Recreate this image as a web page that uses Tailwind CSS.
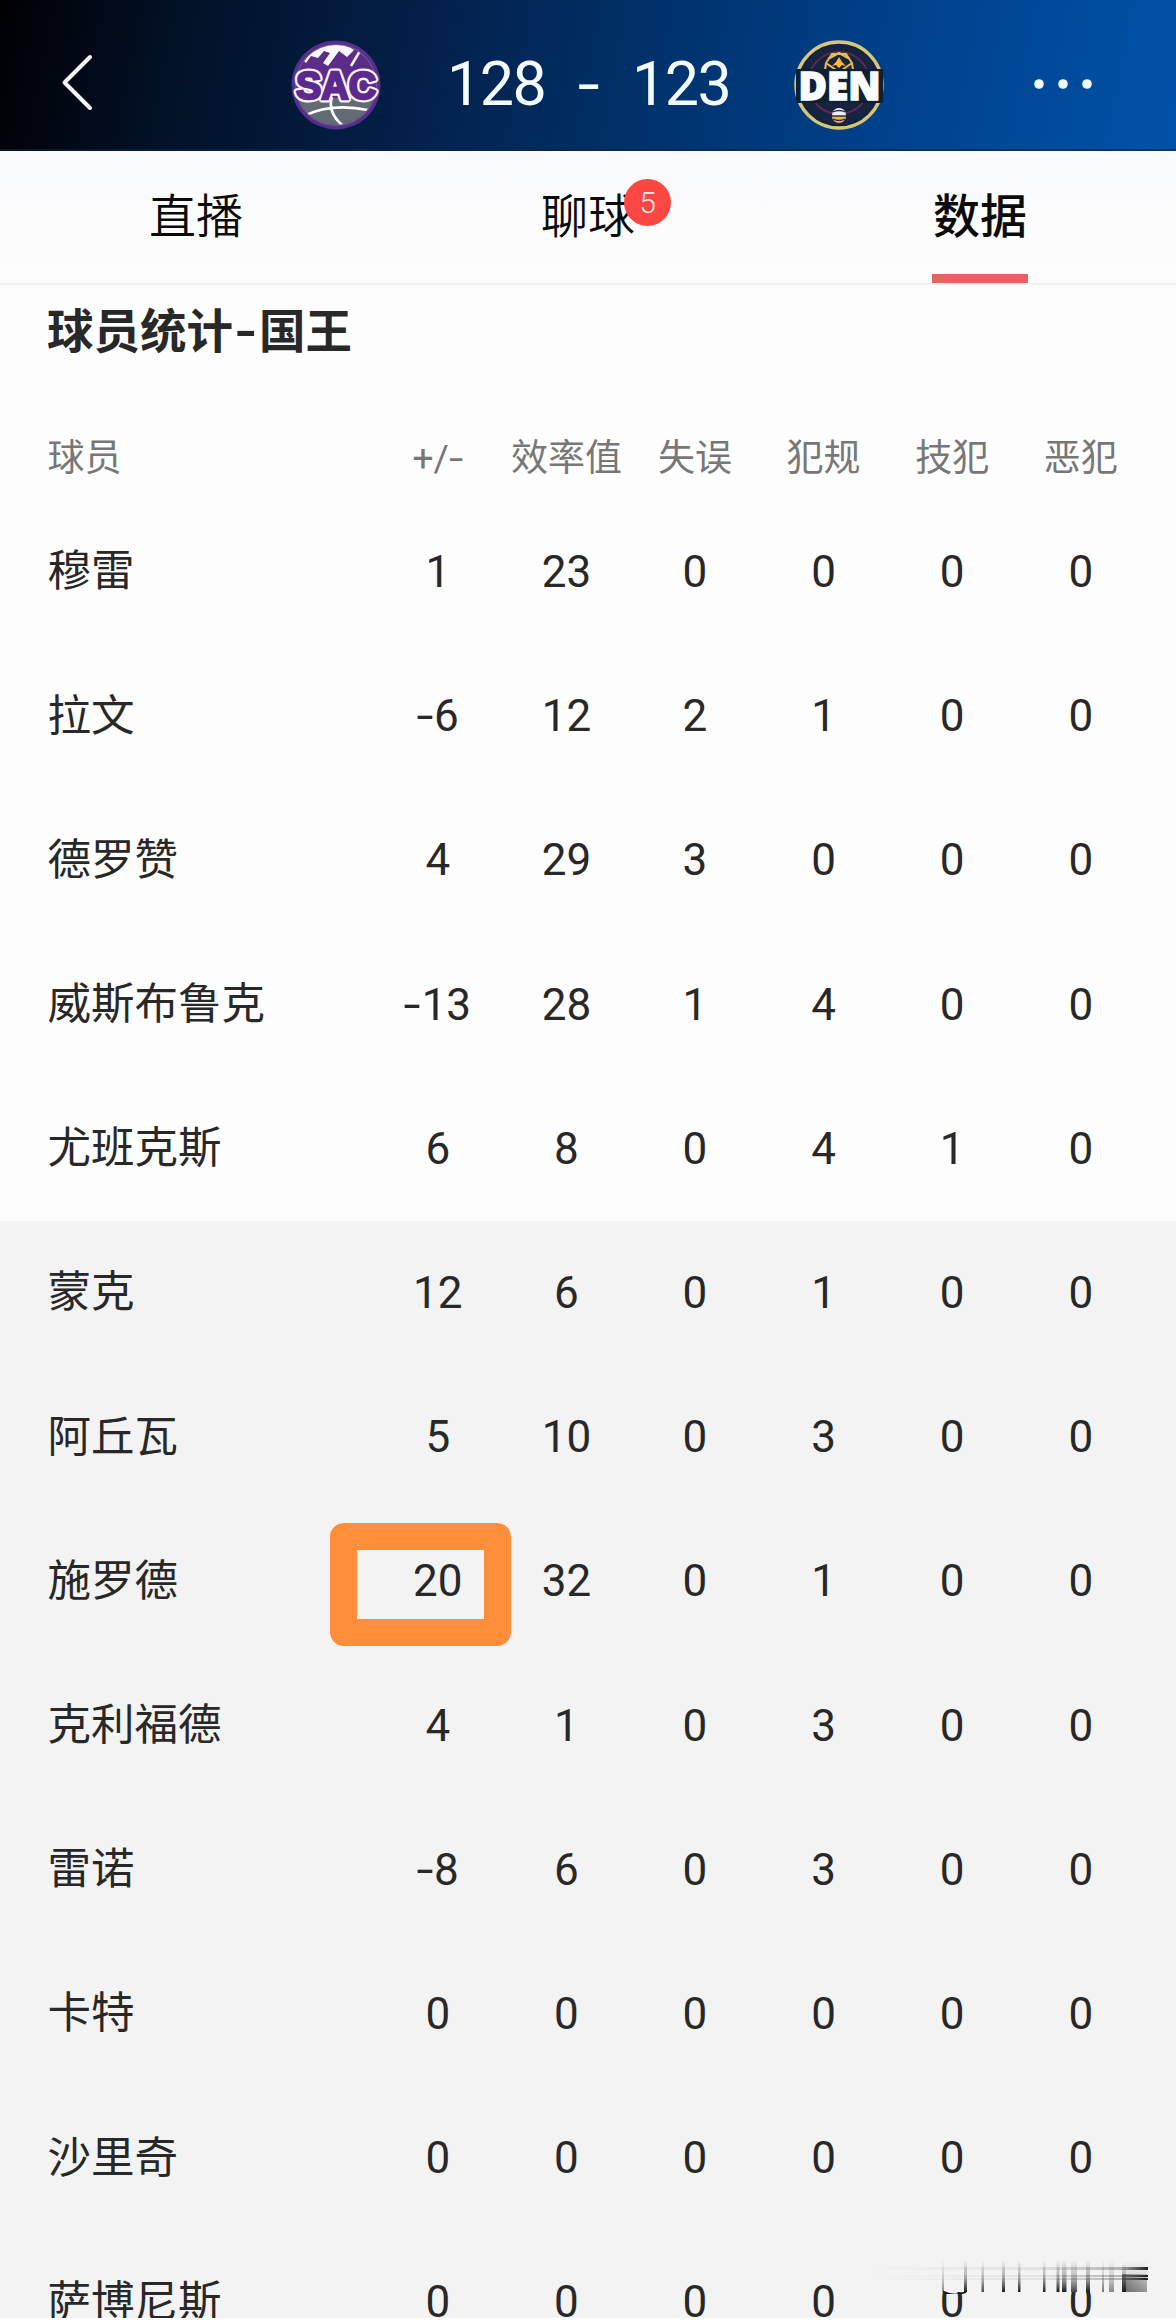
<!DOCTYPE html>
<html lang="zh-CN">
    <head>
        <meta charset="UTF-8" />
        <meta name="viewport" content="width=device-width, initial-scale=1.0" />
        <title>球员统计</title>
        <script src="https://cdn.jsdelivr.net/npm/@tailwindcss/browser@4"></script>
    </head>
    <body class="bg-white">
        <div class="relative w-[1176px] h-[2320px] overflow-hidden bg-[#fdfdfd] font-[Roboto,'Noto_Sans_CJK_SC',sans-serif] text-[#282828]">
            <!-- score header -->
            <header class="flex items-center h-[151px] pt-[18px] border-b-2 border-[#0b2545]/60 bg-[linear-gradient(101deg,#000003_0%,#021024_14%,#03204a_36%,#003067_53%,#00408a_74%,#0052a8_100%)] text-[#f4fcff]">
                <svg class="ml-[58px] w-10 h-[60px]" viewBox="0 0 40 60" fill="none" stroke="#f5f7fa" stroke-width="4" stroke-linecap="round" stroke-linejoin="round">
                    <path d="M32 3 6.500 28.500 32 54" />
                </svg>
                <!-- SAC -->
                <svg class="ml-[192px] mt-[2px] w-[92px] h-[92px]" viewBox="0 0 92 92">
                    <defs><clipPath id="sac"><circle cx="46" cy="46" r="40" /></clipPath></defs>
                    <circle cx="46" cy="46" r="44.500" fill="#55308a" />
                    <circle cx="46" cy="46" r="41" fill="#725796" />
                    <g clip-path="url(#sac)">
                        <rect width="92" height="92" fill="#5c2d88" />
                        <path d="M14 22 Q26 5 46 5 Q57 5 64 11 L57 18 49 12 38 27 33 24 40 14 34 12 28 19 21 17 16 24Z" fill="#fbf7ff" />
                        <path d="M70 12 61 27" stroke="#f6efff" stroke-width="2.500" />
                        <rect y="59" width="92" height="33" fill="#626b74" />
                        <path d="M16 76 Q42 64 78 71M42 58 Q37 73 53 87" fill="none" stroke="#fff" stroke-width="2.600" />
                    </g>
                    <text x="46" y="59.500" text-anchor="middle" textLength="80" lengthAdjust="spacingAndGlyphs" font-family="Liberation Sans" font-weight="700" font-size="38" fill="#5b2a8c" stroke="#fdf4ff" stroke-width="7" stroke-linejoin="round" paint-order="stroke">SAC</text>
                    <text x="46" y="59.500" text-anchor="middle" textLength="80" lengthAdjust="spacingAndGlyphs" font-family="Liberation Sans" font-weight="700" font-size="38" fill="#5b2a8c" stroke="#5b2a8c" stroke-width="2.400">SAC</text>
                </svg>
                <div class="flex items-center ml-[65px] text-[61px] leading-[70px] font-normal tracking-[-1.5px]">
                    <span class="w-[97px] text-center">128</span>
                    <span class="w-[22px] mx-[33px] flex justify-center"><span class="scale-x-130">-</span></span>
                    <span class="w-[97px] text-center">123</span>
                </div>
                <!-- DEN -->
                <svg class="ml-[64px] mt-[2px] w-[92px] h-[92px]" viewBox="0 0 92 92">
                    <circle cx="46" cy="46" r="43" fill="#10223c" stroke="#d8c67a" stroke-width="3.400" />
                    <circle cx="46" cy="46" r="39.500" fill="#18233f" />
                    <circle cx="46" cy="44" r="31" fill="none" stroke="#622c5c" stroke-width="1.600" />
                    <path d="M31 38 33 24 39 15H53L59 24 61 38M33 24 46 33 59 24M35 20 46 14 57 20" fill="none" stroke="#e7bd53" stroke-width="2" />
                    <path d="M39 27 43 23 46 18 49 23 53 27 49 26 46 29 43 26Z" fill="#f6b640" />
                    <rect x="3" y="30" width="87" height="34" fill="#0d2132" />
                    <text x="46.500" y="60.500" text-anchor="middle" textLength="82" lengthAdjust="spacingAndGlyphs" font-family="Open Sans" font-weight="800" font-size="38" fill="#fafcff" stroke="#fafcff" stroke-width="1.500">DEN</text>
                    <circle cx="46" cy="76" r="7" fill="#f1f1ee" />
                    <path d="M39 77H53A7 7 0 0 1 39 77Z" fill="#ebb44f" />
                    <path d="M40 73 Q46 70 52 73M39 77H53M40 80 Q46 83 52 80" fill="none" stroke="#28304a" stroke-width="1.300" />
                </svg>
                <svg class="ml-[146px] w-16 h-4" viewBox="0 0 64 16" fill="#eefaff">
                    <circle cx="8" cy="8" r="4.800" />
                    <circle cx="32" cy="8" r="4.800" />
                    <circle cx="56" cy="8" r="4.800" />
                </svg>
            </header>

            <!-- tabs -->
            <nav class="grid grid-cols-3 h-[134px] border-b-2 border-[#f0f0f1] bg-[linear-gradient(#f9fafc,#fdfdfd)] text-[47px] text-[#0b0b0b]">
                <div class="flex justify-center"><span class="leading-[131px] font-[350]">直播</span></div>
                <div class="flex justify-center">
                    <span class="relative leading-[131px] font-[350]">聊球
                        <span class="absolute left-[83px] top-[28px] w-[47px] h-[47px] rounded-full bg-[#fc4742] text-[#ffe9e6] text-[30px] leading-[47px] text-center">5</span>
                    </span>
                </div>
                <div class="flex justify-center">
                    <span class="h-[132px] leading-[131px] font-medium border-b-[9px] border-[#e96262] px-px">数据</span>
                </div>
            </nav>

            <h1 class="flex h-[90px] pl-[47px] leading-[94px] text-[46.500px] font-bold"><span>球员统计</span><span class="w-[26px] text-center scale-x-130">-</span><span>国王</span></h1>

            <div class="grid grid-cols-[326px_repeat(6,128.600px)] items-center h-[82px] mt-[43px] pl-[47.500px] text-[37px] text-[#777777] text-center whitespace-nowrap">
                <span class="text-left">球员</span>
                <span>+/<span class="inline-block scale-x-140 mx-[2px]">-</span></span>
                <span>效率值</span>
                <span>失误</span>
                <span>犯规</span>
                <span>技犯</span>
                <span>恶犯</span>
            </div>
            <div id="js-player-rows"></div>

            <!-- smudged mark in the corner -->
            <svg class="absolute left-[870px] top-[2258px] w-[284px] h-9" viewBox="0 0 284 36">
                <defs>
                    <linearGradient id="v" x2="0" y2="1"><stop stop-color="#222" stop-opacity="0" /><stop offset="0.550" stop-color="#222" stop-opacity="0.350" /><stop offset="1" stop-color="#111" stop-opacity="0.950" /></linearGradient>
                    <linearGradient id="h"><stop stop-color="#222" stop-opacity="0" /><stop offset="0.600" stop-color="#222" stop-opacity="0.080" /><stop offset="0.900" stop-color="#222" stop-opacity="0.300" /><stop offset="1" stop-color="#111" stop-opacity="0.950" /></linearGradient>
                    <linearGradient id="b"><stop stop-color="#222" stop-opacity="0.950" /><stop offset="1" stop-color="#222" stop-opacity="0.300" /></linearGradient>
                </defs>
                <rect x="0" y="2" width="284" height="32" fill="#f3f3f3" />
                <g fill="url(#v)">
                    <rect x="72" y="2" width="2" height="32" opacity="0.500" />
                    <rect x="94" y="2" width="3" height="32" />
                    <rect x="111.500" y="2" width="2.500" height="32" opacity="0.800" />
                    <rect x="132" y="2" width="3" height="32" />
                    <rect x="148" y="2" width="2.500" height="32" />
                    <rect x="173" y="2" width="2.500" height="32" />
                    <rect x="186.500" y="2" width="3" height="32" />
                    <rect x="192" y="2" width="4.500" height="32" />
                    <rect x="201" y="2" width="6" height="32" opacity="0.800" />
                    <rect x="216" y="2" width="4" height="32" />
                    <rect x="232" y="2" width="2" height="32" opacity="0.600" />
                    <rect x="239" y="2" width="5" height="32" opacity="0.500" />
                    <rect x="252" y="2" width="25" height="32" opacity="0.350" />
                </g>
                <path d="M252 6H256V34H252Z" fill="url(#v)" />
                <rect x="252" y="16" width="25" height="18" fill="url(#b)" opacity="0.500" />
                <g fill="url(#h)">
                    <rect x="2" y="9" width="276" height="3" />
                    <rect x="2" y="17" width="276" height="2" />
                    <rect x="2" y="20" width="276" height="2" />
                </g>
                <path d="M73 33.500 Q84 39 96 34" fill="none" stroke="#161616" stroke-width="1.500" />
            </svg>
            <div class="absolute left-0 bottom-0 w-full h-[2px] bg-[#fdfdfd]"></div>
            <!-- marker around 施罗德 +/- -->
            <div class="absolute left-[330px] top-[1523px] w-[181px] h-[123px] rounded-[14px] border-[27px] border-[#ff8e3a]"></div>
        </div>

        <script>
            const players = [
                ["穆雷", 1, 23, 0, 0, 0, 0],
                ["拉文", -6, 12, 2, 1, 0, 0],
                ["德罗赞", 4, 29, 3, 0, 0, 0],
                ["威斯布鲁克", -13, 28, 1, 4, 0, 0],
                ["尤班克斯", 6, 8, 0, 4, 1, 0],
                ["蒙克", 12, 6, 0, 1, 0, 0],
                ["阿丘瓦", 5, 10, 0, 3, 0, 0],
                ["施罗德", 20, 32, 0, 1, 0, 0],
                ["克利福德", 4, 1, 0, 3, 0, 0],
                ["雷诺", -8, 6, 0, 3, 0, 0],
                ["卡特", 0, 0, 0, 0, 0, 0],
                ["沙里奇", 0, 0, 0, 0, 0, 0],
                ["萨博尼斯", 0, 0, 0, 0, 0, 0],
            ];
            // the hyphen is drawn a bit wider than the font has it
            const stat = (n) => String(n).replace("-", '<span class="inline-block scale-x-140 ml-[2px] mr-[3px]">-</span>');

            document.getElementById("js-player-rows").innerHTML = players
                .map(([name, ...stats], i) => {
                    // first five are the starters
                    const bg = i < 5 ? "bg-[#fdfdfd]" : "bg-[#f3f3f3]";
                    const cells = stats.map((n) => `<span class="text-[44px]">${stat(n)}</span>`).join("");
                    return `<div class="grid grid-cols-[326px_repeat(6,128.600px)] items-center h-[144.200px] pl-[47.500px] text-center whitespace-nowrap ${bg}"><span class="text-left text-[43.500px]">${name}</span>${cells}</div>`;
                })
                .join("");
        </script>
    </body>
</html>
